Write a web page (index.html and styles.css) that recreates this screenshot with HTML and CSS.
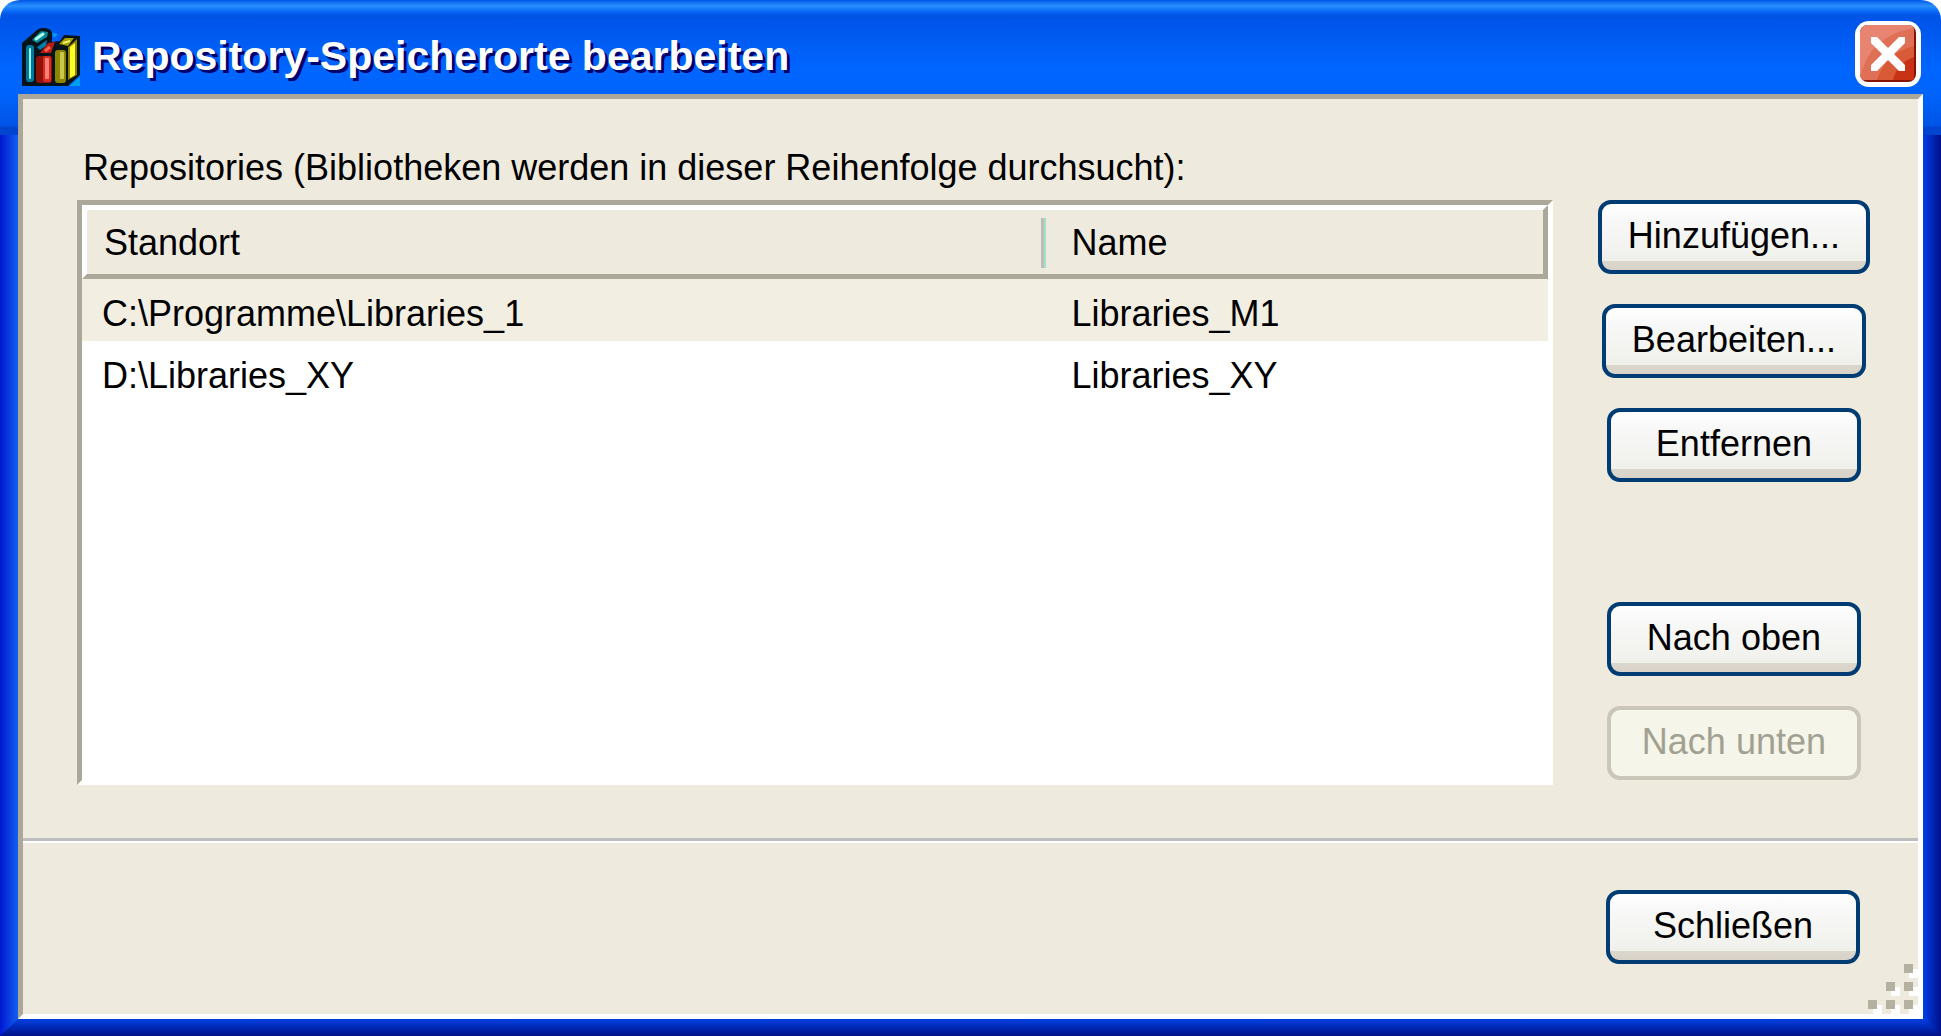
FILE: index.html
```html
<!DOCTYPE html>
<html lang="de">
<head>
  <meta charset="UTF-8">
  <meta name="viewport" content="width=device-width, initial-scale=1.0">
  <title>Repository-Speicherorte bearbeiten</title>
  <link rel="stylesheet" href="styles.css">
</head>
<body>
  <div class="window">
    <header class="titlebar">
      <svg class="app-icon" viewBox="0 0 58 58" aria-hidden="true">
        <path d="M0 15L15 2q2-2 6-2 8 0 9 5v9l8-1 4-6 16 1v39L46 58H0z" fill="#06131a"/>
        <path d="M30 5l6 1-4 4zM58 49v9H47z" fill="#00a0f0"/>
        <rect x="4" y="17" width="8" height="37" rx="3" fill="#007a9c"/>
        <rect x="7" y="20" width="2" height="31" rx="1" fill="#9ff5f0"/>
        <path d="M10 12l9-9 7 1-1 5-10 6z" fill="#0a8a98"/>
        <path d="M14 11l7-5" stroke="#a8fff0" stroke-width="3" stroke-linecap="round"/>
        <path d="M15 19l10-7-1 6-6 4z" fill="#007eab"/>
        <path d="M18 25l8-10 7-1-4 11z" fill="#b81c10"/>
        <path d="M23 23l5-4" stroke="#ff6258" stroke-width="3"/>
        <rect x="14" y="28" width="16" height="27" rx="3" fill="#8e1208"/>
        <rect x="21" y="28" width="8" height="26" rx="2" fill="#d82c20"/>
        <rect x="23" y="30" width="4" height="21" rx="1" fill="#ff8078"/>
        <path d="M37 16l6-6h9l-6 8z" fill="#a8a000"/>
        <path d="M41 15l7-2" stroke="#f0f070" stroke-width="2"/>
        <rect x="33" y="22" width="11" height="33" rx="3" fill="#8c8600"/>
        <rect x="38" y="24" width="4" height="27" rx="1" fill="#c8c84c"/>
        <path d="M46 19l9-8v36l-9 5z" fill="#8c8400"/>
        <path d="M48 19l5-4v32l-5 3z" fill="#ffff28"/>
      </svg>
      <h1 class="title">Repository-Speicherorte bearbeiten</h1>
      <button type="button" class="close-btn" aria-label="Fenster schließen">
        <svg viewBox="0 0 66 66" aria-hidden="true">
          <defs>
            <clipPath id="face"><rect x="5" y="4" width="56" height="57" rx="8"/></clipPath>
          </defs>
          <rect width="66" height="66" rx="14" fill="#fff"/>
          <g clip-path="url(#face)">
            <path d="M0 0h66v66H0z" fill="#851405"/>
            <rect x="4" y="3" width="55" height="56" rx="6" fill="#e78572"/>
            <path d="M59 7Q12 15 5 59h54z" fill="#e07055"/>
            <path d="M59 25Q30 32 22 59h37z" fill="#d95a37"/>
            <path d="M59 36Q42 42 38 59h21z" fill="#ca3216"/>
          </g>
          <path d="M16 16h6l11 11 11-11h6v6L39 33l11 11v6h-6L33 39 22 50h-6v-6l11-11-11-11z" fill="#fff"/>
        </svg>
      </button>
    </header>

    <div class="panel">
      <main class="content">
        <p class="caption" id="list-caption">Repositories (Bibliotheken werden in dieser Reihenfolge durchsucht):</p>
        <div class="columns">
          <div class="list">
            <table aria-labelledby="list-caption">
              <thead>
                <tr>
                  <th scope="col" class="col-location">Standort</th>
                  <th scope="col" class="col-name">Name</th>
                </tr>
              </thead>
              <tbody>
                <tr class="selected">
                  <td>C:\Programme\Libraries_1</td>
                  <td>Libraries_M1</td>
                </tr>
                <tr>
                  <td>D:\Libraries_XY</td>
                  <td>Libraries_XY</td>
                </tr>
              </tbody>
            </table>
          </div>

          <div class="actions">
            <button type="button" class="btn">Hinzufügen...</button>
            <button type="button" class="btn">Bearbeiten...</button>
            <button type="button" class="btn">Entfernen</button>
            <button type="button" class="btn btn-move">Nach oben</button>
            <button type="button" class="btn" disabled>Nach unten</button>
          </div>
        </div>
      </main>

      <footer class="footer">
        <button type="button" class="btn">Schließen</button>
        <svg class="grip" viewBox="0 0 50 50" aria-hidden="true">
          <path d="M41 5h9v9h-9zM23 23h9v9h-9zM41 23h9v9h-9zM5 41h9v9H5zM23 41h9v9h-9zM41 41h9v9h-9z" fill="#fff"/>
          <path d="M36 0h9v9h-9zM18 18h9v9h-9zM36 18h9v9h-9zM0 36h9v9H0zM18 36h9v9h-9zM36 36h9v9h-9z" fill="#b5b1a1"/>
        </svg>
      </footer>
    </div>
  </div>
</body>
</html>
```
FILE: styles.css
```css
* {
  box-sizing: border-box;
}

body {
  margin: 0;
  background: #ffffff;
  color: #000000;
  font-family: "Liberation Sans", Arial, sans-serif;
  font-size: 36px;
  line-height: 52px;
}

.window {
  position: relative;
  display: flex;
  flex-direction: column;
  min-height: 100vh;
  padding: 0 18px 17px;
  border-radius: 20px 20px 0 0;
  background:
    linear-gradient(180deg, #0058e8 0, #2a90ff 6px, #0a6cf8 11px, #0054e6 15px, #0058ee 30px, #0066ff 70px, #0064fc 94px, #0054e4 126px, #0044d0 127px, #0044d0 135px) top / 100% 135px no-repeat,
    linear-gradient(90deg, #0018d0, #1460f0) left / 18px 100% no-repeat,
    linear-gradient(90deg, #0040e8, #001088) right / 18px 100% no-repeat;
}

/* bottom frame edge, mitred into the side edges */
.window::after {
  content: "";
  position: absolute;
  left: 0;
  right: 0;
  bottom: 0;
  height: 17px;
  background: linear-gradient(180deg, #0040e0, #001088);
  clip-path: polygon(18px 0, calc(100% - 18px) 0, 100% 100%, 0 100%);
}

.titlebar {
  display: flex;
  align-items: center;
  height: 94px;
  padding: 14px 2px 0 4px;
}

.app-icon {
  flex: none;
  width: 58px;
  height: 58px;
  margin-top: 6px;
}

.title {
  flex: 1;
  margin: 0 0 0 12px;
  padding-top: 4px;
  color: #ffffff;
  font-size: 41px;
  font-weight: bold;
  line-height: 60px;
  white-space: nowrap;
  text-shadow: 3px 3px 0 #00006c;
}

.close-btn {
  flex: none;
  width: 66px;
  height: 66px;
  padding: 0;
  border: none;
  background: none;
}

.close-btn svg {
  display: block;
}

.panel {
  display: flex;
  flex: 1;
  flex-direction: column;
  border: 5px solid;
  border-color: #aca899 #ffffff #ffffff #aca899;
  background: #eeeadd;
}

.content {
  display: flex;
  flex: 1;
  flex-direction: column;
  padding: 43px 48px 53px 54px;
}

.caption {
  margin: 0 0 6px 6px;
  white-space: nowrap;
}

.columns {
  display: flex;
  flex: 1;
  gap: 45px;
}

.list {
  flex: 1;
  border: 5px solid;
  border-color: #aca899 #ffffff #ffffff #aca899;
  background: #ffffff;
}

table {
  width: 100%;
  border-collapse: separate;
  border-spacing: 0;
  table-layout: fixed;
}

th,
td {
  height: 62px;
  padding: 8px 0 0 20px;
  font-weight: normal;
  text-align: left;
}

th {
  height: 74px;
  padding: 2px 0 0 17px;
  border-top: 5px solid #ffffff;
  border-bottom: 5px solid #aca899;
  background: #eeeadd;
}

.col-location {
  width: 66%;
  border-left: 5px solid #ffffff;
  background: linear-gradient(90deg, #bdbdb8 3px, #a4e0cc 3px) right 3px top 8px / 5px 50px no-repeat #eeeadd;
}

.col-name {
  padding-left: 22px;
  border-right: 5px solid #aca899;
}

td + td {
  padding-left: 22px;
}

.selected td {
  background: #f2eee1;
}

.actions {
  display: flex;
  flex-direction: column;
  align-items: center;
  gap: 30px;
}

.btn {
  min-width: 254px;
  height: 74px;
  padding: 0 26px 2px;
  border: 4px solid #003c74;
  border-radius: 13px;
  background: linear-gradient(180deg, #ffffff 0, #f8f8f8 16px, #f0f0eb 57px, #dcd7cd 57px, #d8d2c8 66px);
  color: #000000;
  font: inherit;
  white-space: nowrap;
}

.btn:disabled {
  border-color: #cac6b8;
  background: #f5f5e9;
  color: #a1a192;
}

.btn-move {
  margin-top: 90px;
}

.footer {
  position: relative;
  padding: 49px 58px 50px;
  border-top: 3px solid #bdbdbd;
  box-shadow: inset 0 2px 0 #ffffff;
}

.footer .btn {
  display: block;
  margin-left: auto;
}

.grip {
  position: absolute;
  right: 0;
  bottom: 0;
  width: 50px;
  height: 50px;
}
```
